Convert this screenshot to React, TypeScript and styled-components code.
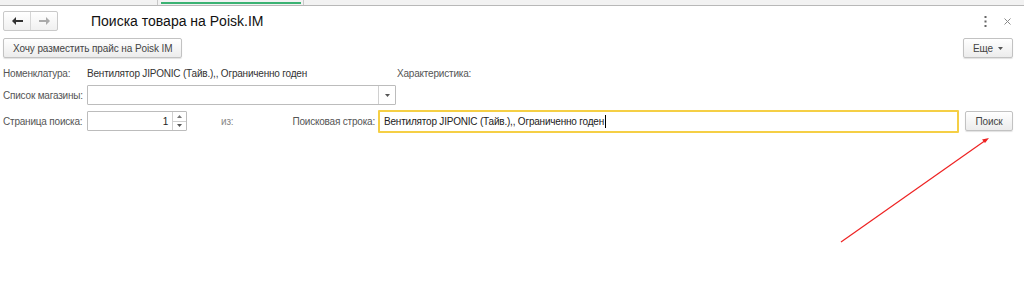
import * as React from 'react'
import styled, { createGlobalStyle } from 'styled-components'

const GlobalStyle = createGlobalStyle`
  body {
    margin: 0;
    background: #fff;
    font-family: Arial, 'Liberation Sans', sans-serif;
    font-size: 10px;
    letter-spacing: -0.2px;
    color: #333;
  }
`

const Page = styled.div`
  position: relative;
  width: 1024px;
  height: 300px;
  overflow: hidden;
`

const TabStrip = styled.div`
  display: flex;
  height: 5px;
  background: #f2f2f2;
  border-bottom: 1px solid #b8b8b8;
  padding-left: 157px;
`

const Tab = styled.div`
  width: 147px;
  border-left: 1px solid #c8c8c8;
  border-right: 1px solid #c8c8c8;
  padding: 2px 2px 0 3px;
  box-sizing: border-box;
`

const TabMark = styled.div`
  height: 2px;
  background: #3bb273;
`

const Header = styled.div`
  display: flex;
  align-items: center;
  height: 18px;
  margin-top: 6px;
  padding: 0 10px 0 3px;
`

const NavGroup = styled.div`
  display: flex;
  height: 18px;
  border: 1px solid #c9c9c9;
  border-radius: 2px;
  background: linear-gradient(#fff, #f0f0f0);
`

const NavBtn = styled.div<{ $muted?: boolean }>`
  width: 26px;
  display: flex;
  align-items: center;
  justify-content: center;
  color: ${p => (p.$muted ? '#aaa' : '#333')};
  & + & {
    border-left: 1px solid #d6d6d6;
  }
`

const Title = styled.h1`
  margin: 0 0 0 33px;
  font-size: 14px;
  letter-spacing: 0;
  font-weight: normal;
  color: #111;
`

const Spacer = styled.div`
  flex: 1;
`

const HeaderIcon = styled.span`
  display: flex;
  align-items: center;
  justify-content: center;
  width: 14px;
  margin-left: 8px;
`

const CommandBar = styled.div`
  display: flex;
  align-items: center;
  margin-top: 8px;
  padding: 0 11px 0 3px;
`

const Button = styled.button<{ $w?: number }>`
  height: 20px;
  ${p => (p.$w ? `width: ${p.$w}px;` : '')}
  padding: 0 9px;
  border: 1px solid #c2c2c2;
  border-radius: 2px;
  background: linear-gradient(#fff, #ececec);
  box-shadow: 0 1px 1px rgba(0, 0, 0, 0.12);
  font-family: Arial, 'Liberation Sans', sans-serif;
  font-size: 10px;
  letter-spacing: -0.1px;
  color: #444;
  display: flex;
  align-items: center;
  justify-content: center;
  gap: 5px;
`

const Form = styled.div`
  display: flex;
  flex-direction: column;
  padding: 0 11px 0 3px;
`

const Row = styled.div<{ $top: number; $h?: number }>`
  display: flex;
  align-items: center;
  margin-top: ${p => p.$top}px;
  height: ${p => p.$h ?? 20}px;
`

const Label = styled.span<{ $w?: number }>`
  width: ${p => p.$w ?? 84}px;
  flex-shrink: 0;
  color: #555;
  white-space: nowrap;
`

const Value = styled.span<{ $w?: number }>`
  width: ${p => p.$w ?? 310}px;
  flex-shrink: 0;
  color: #333;
  white-space: nowrap;
`

const Gap = styled.div`
  flex: 1;
  display: flex;
  align-items: center;
  justify-content: space-between;
  padding: 0 3px 0 34px;
`

const Hint = styled.span<{ $dim?: boolean }>`
  color: ${p => (p.$dim ? '#888' : '#555')};
  white-space: nowrap;
`

const Field = styled.div<{ $w: number; $focus?: boolean }>`
  display: flex;
  align-items: stretch;
  flex-shrink: 0;
  width: ${p => p.$w}px;
  height: ${p => (p.$focus ? 23 : 20)}px;
  box-sizing: border-box;
  border: ${p => (p.$focus ? '2px solid #f5cf45' : '1px solid #bcbcbc')};
  border-radius: 1px;
  background: #fff;
`

const FieldText = styled.div<{ $right?: boolean }>`
  flex: 1;
  display: flex;
  align-items: center;
  justify-content: ${p => (p.$right ? 'flex-end' : 'flex-start')};
  padding: 0 4px;
  color: #222;
  white-space: nowrap;
`

const Caret = styled.span`
  display: inline-block;
  width: 1px;
  height: 13px;
  background: #000;
  margin-left: 1px;
`

const DropBtn = styled.div`
  width: 16px;
  border-left: 1px solid #d0d0d0;
  display: flex;
  align-items: center;
  justify-content: center;
`

const Spin = styled.div`
  width: 13px;
  border-left: 1px solid #d0d0d0;
  display: flex;
  flex-direction: column;
`

const SpinHalf = styled.div`
  flex: 1;
  display: flex;
  align-items: center;
  justify-content: center;
  & + & {
    border-top: 1px solid #d0d0d0;
  }
`

const SearchBtnWrap = styled.div`
  margin-left: 6px;
`

const Annotation = styled.svg`
  position: absolute;
  left: 0;
  top: 0;
  pointer-events: none;
`

const TriDown = () => (
  <svg width="5" height="3" viewBox="0 0 5 3">
    <path d="M0 0h5L2.5 3z" fill="#555" />
  </svg>
)

const Arrow = ({ left }: { left?: boolean }) => (
  <svg width="11" height="8" viewBox="0 0 11 8">
    {left ? (
      <path d="M0 4l4-4v3h7v2H4v3z" fill="currentColor" />
    ) : (
      <path d="M11 4L7 0v3H0v2h7v3z" fill="currentColor" />
    )}
  </svg>
)

export default function App() {
  return (
    <Page>
      <GlobalStyle />
      <TabStrip>
        <Tab>
          <TabMark />
        </Tab>
      </TabStrip>

      <Header>
        <NavGroup>
          <NavBtn>
            <Arrow left />
          </NavBtn>
          <NavBtn $muted>
            <Arrow />
          </NavBtn>
        </NavGroup>
        <Title>Поиска товара на Poisk.IM</Title>
        <Spacer />
        <HeaderIcon>
          <svg width="3" height="11" viewBox="0 0 3 11">
            <rect x="0.5" y="0" width="2" height="2" fill="#666" />
            <rect x="0.5" y="4.5" width="2" height="2" fill="#666" />
            <rect x="0.5" y="9" width="2" height="2" fill="#666" />
          </svg>
        </HeaderIcon>
        <HeaderIcon>
          <svg width="7" height="7" viewBox="0 0 7 7">
            <path d="M0.5 0.5l6 6M6.5 0.5l-6 6" stroke="#888" strokeWidth="1" />
          </svg>
        </HeaderIcon>
      </Header>

      <CommandBar>
        <Button>Хочу разместить прайс на Poisk IM</Button>
        <Spacer />
        <Button $w={50}>
          Еще <TriDown />
        </Button>
      </CommandBar>

      <Form>
        <Row $top={5}>
          <Label>Номенклатура:</Label>
          <Value>Вентилятор JIPONIC (Тайв.),, Ограниченно годен</Value>
          <Label>Характеристика:</Label>
        </Row>
        <Row $top={2}>
          <Label>Список магазины:</Label>
          <Field $w={309}>
            <FieldText />
            <DropBtn>
              <TriDown />
            </DropBtn>
          </Field>
        </Row>
        <Row $top={4} $h={24}>
          <Label>Страница поиска:</Label>
          <Field $w={100}>
            <FieldText $right>1</FieldText>
            <Spin>
              <SpinHalf>
                <svg width="5" height="3" viewBox="0 0 5 3">
                  <path d="M0 3h5L2.5 0z" fill="#777" />
                </svg>
              </SpinHalf>
              <SpinHalf>
                <TriDown />
              </SpinHalf>
            </Spin>
          </Field>
          <Gap>
            <Hint $dim>из:</Hint>
            <Hint>Поисковая строка:</Hint>
          </Gap>
          <Field $w={581} $focus>
            <FieldText>
              Вентилятор JIPONIC (Тайв.),, Ограниченно годен
              <Caret />
            </FieldText>
          </Field>
          <SearchBtnWrap>
            <Button $w={48}>Поиск</Button>
          </SearchBtnWrap>
        </Row>
      </Form>

      <Annotation width="1024" height="300" viewBox="0 0 1024 300">
        <line x1="841" y1="242" x2="986" y2="140" stroke="#ee2222" strokeWidth="1.2" />
        <path d="M989 138l-7 1.5 3 3.5z" fill="#ee2222" />
      </Annotation>
    </Page>
  )
}
